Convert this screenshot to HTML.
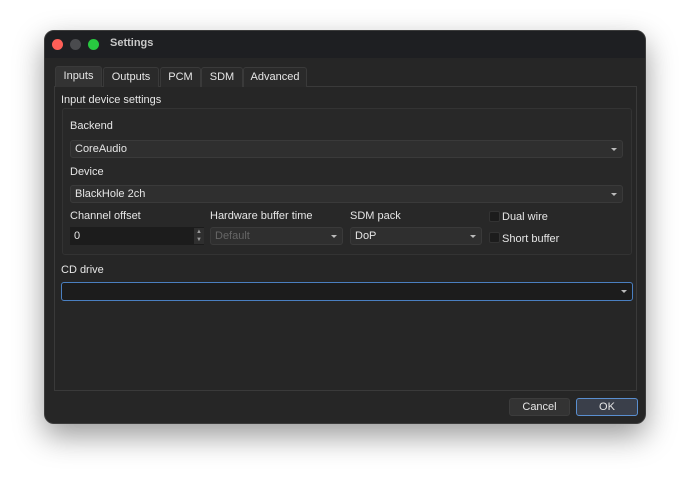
<!DOCTYPE html>
<html><head><style>
*{box-sizing:border-box;margin:0;padding:0}
body{width:690px;height:483px;background:#fff;font-family:"Liberation Sans",sans-serif;font-size:11px;color:#e6e6e6;position:relative;overflow:hidden}
.win{position:absolute;left:44px;top:30px;width:602px;height:394px;background:#262626;border-radius:10px;border:1px solid #3c3c3c;box-shadow:0 12px 30px rgba(0,0,0,.4);overflow:hidden}
.tb{position:absolute;left:0;top:0;width:100%;height:27px;background:#1e1f22}
.dot{position:absolute;top:8px;width:11px;height:11px;border-radius:50%}
.a{position:absolute}
.tab{position:absolute;top:36px;height:20px;background:#2a2a2a;border:1px solid #3a3a3a;border-bottom:none;border-radius:3px 3px 0 0;text-align:center;line-height:19px;font-size:11px}
.panel{position:absolute;left:9px;top:55px;width:583px;height:305px;border:1px solid #3a3a3a;background:#262626}
.grp{position:absolute;left:17px;top:77px;width:570px;height:147px;border:1px solid #333;border-radius:3px;background:#282828}
.cb{position:absolute;height:18px;background:#2f2f2f;border:1px solid #3a3a3a;border-radius:3px;padding-left:4px;line-height:16px}
.cb:after{content:"";position:absolute;right:5px;top:7px;border-left:3px solid transparent;border-right:3px solid transparent;border-top:3px solid #bbb}
.chk{position:absolute;width:11px;height:11px;background:#1c1c1c;border:1px solid #333;border-radius:2px}
.btn{position:absolute;top:367px;height:18px;border-radius:3px;text-align:center;line-height:17px}
</style></head><body>
<div class="win">
<div class="tb">
<div class="dot" style="left:7px;background:#fe5f57"></div>
<div class="dot" style="left:25px;background:#4a4b4e"></div>
<div class="dot" style="left:43px;background:#28c840"></div>
<div class="a" style="left:65px;top:6px;font-weight:bold;color:#c8c8c8">Settings</div>
</div>
<div class="panel"></div>
<div class="tab" style="left:10px;width:47px;top:35px;height:21px;background:#333">Inputs</div>
<div class="tab" style="left:58px;width:56px">Outputs</div>
<div class="tab" style="left:115px;width:41px">PCM</div>
<div class="tab" style="left:156px;width:42px">SDM</div>
<div class="tab" style="left:198px;width:64px">Advanced</div>
<div class="a" style="left:16px;top:63px">Input device settings</div>
<div class="grp"></div>
<div class="a" style="left:25px;top:89px">Backend</div>
<div class="cb" style="left:25px;top:109px;width:553px">CoreAudio</div>
<div class="a" style="left:25px;top:135px">Device</div>
<div class="cb" style="left:25px;top:154px;width:553px">BlackHole 2ch</div>
<div class="a" style="left:25px;top:179px">Channel offset</div>
<div class="a" style="left:165px;top:179px">Hardware buffer time</div>
<div class="a" style="left:305px;top:179px">SDM pack</div>
<div class="a" style="left:25px;top:196px;width:134px;height:18px;background:#1c1c1c;padding-left:4px;line-height:18px">0</div>
<div class="a" style="left:149px;top:197px;width:10px;height:16px;background:#2f2f2f;color:#999;font-size:6px;line-height:8px;text-align:center">▲<br>▼</div>
<div class="cb" style="left:165px;top:196px;width:133px;color:#666">Default</div>
<div class="cb" style="left:305px;top:196px;width:132px">DoP</div>
<div class="chk" style="left:444px;top:180px"></div><div class="a" style="left:457px;top:180px">Dual wire</div>
<div class="chk" style="left:444px;top:201px"></div><div class="a" style="left:457px;top:202px">Short buffer</div>
<div class="a" style="left:16px;top:233px">CD drive</div>
<div class="cb" style="left:16px;top:251px;width:572px;height:19px;background:#1c1c1c;border-color:#4a7fc0"></div>
<div class="btn" style="left:464px;width:61px;background:#333;border:1px solid #3c3c3c">Cancel</div>
<div class="btn" style="left:531px;width:62px;background:#3a3f4a;border:1px solid #5a8fd0">OK</div>
</div>
</body></html>
